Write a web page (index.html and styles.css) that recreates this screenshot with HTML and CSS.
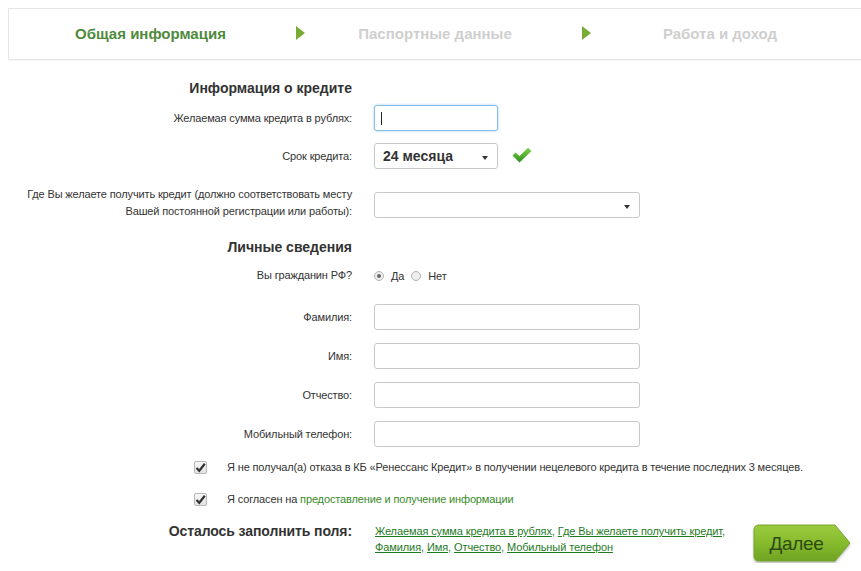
FILE: index.html
```html
<!DOCTYPE html>
<html lang="ru">
<head>
    <meta charset="UTF-8">
    <title>Заявка на кредит</title>
    <link rel="stylesheet" href="styles.css">
</head>
<body>
<div class="page">

    <!-- Steps -->
    <div class="steps">
        <div class="step active">Общая информация</div>
        <div class="step-arrow"><span></span></div>
        <div class="step">Паспортные данные</div>
        <div class="step-arrow"><span></span></div>
        <div class="step">Работа и доход</div>
    </div>

    <!-- Credit info -->
    <div class="section-title first">Информация о кредите</div>

    <div class="row r1">
        <label class="label">Желаемая сумма кредита в рублях:</label>
        <input type="text" class="field short focused">
    </div>

    <div class="row r2">
        <label class="label">Срок кредита:</label>
        <div class="select short bold">24 месяца</div>
        <svg class="ok-icon" width="20" height="16" viewBox="0 0 20 16">
            <defs>
                <linearGradient id="okg" x1="0" y1="0" x2="0" y2="1">
                    <stop offset="0" stop-color="#7fd24a"/>
                    <stop offset="1" stop-color="#2f8f1c"/>
                </linearGradient>
            </defs>
            <polygon points="0.5,8.5 3.5,5.5 7.5,9 16,0.8 19.5,4 7.5,15.5" fill="url(#okg)"/>
        </svg>
    </div>

    <div class="row r3">
        <label class="label">Где Вы желаете получить кредит (должно соответствовать месту<br>Вашей постоянной регистрации или работы):</label>
        <div class="select long"></div>
    </div>

    <!-- Personal info -->
    <div class="section-title second">Личные сведения</div>

    <div class="row radio-row">
        <label class="label">Вы гражданин РФ?</label>
        <span class="radio checked"></span><span class="radio-text">Да</span>
        <span class="radio"></span><span class="radio-text">Нет</span>
    </div>

    <div class="row person first-person">
        <label class="label">Фамилия:</label>
        <input type="text" class="field long">
    </div>
    <div class="row person">
        <label class="label">Имя:</label>
        <input type="text" class="field long">
    </div>
    <div class="row person">
        <label class="label">Отчество:</label>
        <input type="text" class="field long">
    </div>
    <div class="row person">
        <label class="label">Мобильный телефон:</label>
        <input type="text" class="field long">
    </div>

    <div class="check-row c1">
        <span class="cb"><svg width="11" height="11" viewBox="0 0 11 11"><path d="M1.5 6 L4.3 8.8 L9.8 1.8" fill="none" stroke="#333" stroke-width="2.2"/></svg></span>
        <span>Я не получал(а) отказа в КБ «Ренессанс Кредит» в получении нецелевого кредита в течение последних 3 месяцев.</span>
    </div>
    <div class="check-row c2">
        <span class="cb"><svg width="11" height="11" viewBox="0 0 11 11"><path d="M1.5 6 L4.3 8.8 L9.8 1.8" fill="none" stroke="#333" stroke-width="2.2"/></svg></span>
        <span>Я согласен на <a href="#" class="info-link">предоставление и получение информации</a></span>
    </div>

    <!-- Remaining fields + next -->
    <div class="bottom-row">
        <div class="label remain">Осталось заполнить поля:</div>
        <div class="missing">
            <a href="#">Желаемая сумма кредита в рублях</a>, <a href="#">Где Вы желаете получить кредит</a>,<br>
            <a href="#">Фамилия</a>, <a href="#">Имя</a>, <a href="#">Отчество</a>, <a href="#">Мобильный телефон</a>
        </div>
        <button class="next-btn">
            <svg class="next-shape" width="99" height="39" viewBox="0 0 99 39">
                <defs>
                    <linearGradient id="btng" x1="0" y1="0" x2="0" y2="1">
                        <stop offset="0" stop-color="#9bcb3f"/>
                        <stop offset="0.5" stop-color="#86bb2c"/>
                        <stop offset="1" stop-color="#6fa323"/>
                    </linearGradient>
                </defs>
                <path d="M6 1 H82 L97 19 L82 37 H6 Q1 37 1 32 V6 Q1 1 6 1 Z" fill="url(#btng)" stroke="#73a52a" stroke-width="1"/>
            </svg>
            <span class="next-text">Далее</span>
        </button>
    </div>

</div>
</body>
</html>
```

FILE: styles.css
```css
/* General */
body {
    margin: 0;
    font-family: "Liberation Sans", Arial, sans-serif;
    font-size: 11px;
    letter-spacing: -0.14px;
    color: #333;
    background: #fff;
}
.page {
    padding: 8px 0 0 0;
    width: 861px;
    overflow: hidden;
}

/* Steps bar */
.steps {
    margin-left: 8px;
    height: 50px;
    border: 1px solid #e6e6e6;
    border-right: none;
    display: grid;
    grid-template-columns: 283px 17px 252px 50px 218px;
    align-items: center;
    box-shadow: 0 1px 1px rgba(0, 0, 0, 0.04);
    letter-spacing: 0;
}
.step {
    text-align: center;
    font-size: 15px;
    font-weight: bold;
    color: #cfcfcf;
    padding-bottom: 2px;
}
.step.active {
    color: #4f8a3c;
}
.step-arrow {
    display: flex;
    justify-content: center;
}
.step-arrow span {
    width: 0;
    height: 0;
    border-top: 7px solid transparent;
    border-bottom: 7px solid transparent;
    border-left: 9px solid #78ad35;
    margin-bottom: 2px;
}

/* Section titles */
.section-title {
    width: 352px;
    text-align: right;
    font-size: 14px;
    font-weight: bold;
    line-height: 20px;
    letter-spacing: 0;
    color: #333;
}
.section-title.first {
    margin-top: 18px;
}
.section-title.second {
    margin-top: 17px;
}

/* Form rows */
.row {
    display: flex;
    align-items: center;
    min-height: 26px;
}
.label {
    width: 352px;
    flex-shrink: 0;
    text-align: right;
    line-height: 17px;
    color: #333;
}
.r1 { margin-top: 7px; }
.r2 { margin-top: 12px; }
.r3 { margin-top: 17px; }
.r3 .select { margin-top: 3px; }

.field, .select {
    margin-left: 22px;
    height: 26px;
    box-sizing: border-box;
    border: 1px solid #c9c9c9;
    border-radius: 3px;
    background: #fff;
    font-family: "Liberation Sans", Arial, sans-serif;
    padding: 0 8px;
}
.short { width: 124px; }
.long { width: 266px; }

.field.focused {
    border-color: #86bde9;
    box-shadow: 0 0 3px rgba(102, 175, 233, 0.6);
    background: #fff linear-gradient(#222, #222) no-repeat 6px 6px / 1px 13px;
}

.select {
    position: relative;
    display: flex;
    align-items: center;
}
.select.bold {
    font-size: 14px;
    font-weight: bold;
    letter-spacing: 0;
    color: #333;
}
.select::after {
    content: "";
    position: absolute;
    right: 9px;
    top: 12px;
    border-left: 3px solid transparent;
    border-right: 3px solid transparent;
    border-top: 4px solid #333;
}
.ok-icon {
    margin-left: 14px;
    margin-bottom: 3px;
}

/* Radio */
.radio-row {
    margin-top: 10px;
    min-height: 16px;
}
.radio {
    width: 8px;
    height: 8px;
    border: 1px solid #b5b5b5;
    border-radius: 50%;
    background: #eee;
    margin-left: 22px;
    position: relative;
}
.radio + .radio-text + .radio {
    margin-left: 7px;
}
.radio.checked::after {
    content: "";
    position: absolute;
    left: 2px;
    top: 2px;
    width: 4px;
    height: 4px;
    border-radius: 50%;
    background: #666;
}
.radio-text {
    margin-left: 7px;
    font-size: 11px;
}

.person { margin-top: 13px; }
.person.first-person { margin-top: 20px; }

/* Checkboxes */
.check-row {
    display: flex;
    align-items: center;
    padding-left: 194px;
    line-height: 16px;
}
.check-row.c1 { margin-top: 12px; }
.check-row.c2 { margin-top: 16px; }
.cb {
    width: 11px;
    height: 11px;
    border: 1px solid #b8b8b8;
    border-radius: 2px;
    background: linear-gradient(#f6f6f6, #e2e2e2);
    margin-right: 20px;
    display: flex;
    align-items: center;
    justify-content: center;
}
.info-link {
    color: #3a8a2a;
    text-decoration: none;
}

/* Bottom */
.bottom-row {
    display: flex;
    align-items: flex-start;
    margin-top: 16px;
}
.remain {
    font-size: 14px;
    font-weight: bold;
    line-height: 16px;
    letter-spacing: -0.1px;
}
.missing {
    margin-left: 23px;
    width: 356px;
    line-height: 16px;
    font-size: 11px;
    letter-spacing: -0.1px;
    white-space: nowrap;
    color: #1f7a1f;
}
.missing a {
    color: #1f7a1f;
}
.next-btn {
    position: relative;
    margin-left: 22px;
    margin-top: 1px;
    width: 99px;
    height: 39px;
    padding: 0;
    border: none;
    background: none;
    cursor: pointer;
}
.next-shape {
    position: absolute;
    left: 0;
    top: 0;
    filter: drop-shadow(0 2px 1px rgba(0, 0, 0, 0.25));
}
.next-text {
    position: relative;
    display: block;
    padding-right: 12px;
    font-family: "Liberation Sans Narrow", "Liberation Sans", Arial, sans-serif;
    font-size: 19px;
    letter-spacing: -0.3px;
    color: #2c4a14;
    line-height: 37px;
}
```
